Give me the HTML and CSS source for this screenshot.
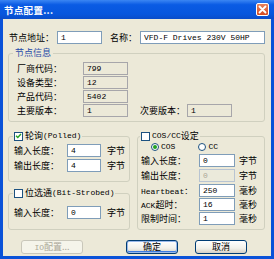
FILE: index.html
```html
<!DOCTYPE html>
<html lang="zh-CN">
<head>
    <meta charset="UTF-8">
    <title>节点配置</title>
    <link rel="stylesheet" href="styles.css">
</head>
<body>
    <div class="window">
        <div class="titlebar">
            <span class="title">节点配置...</span>
            <span class="close">
                <svg width="13" height="13" viewBox="0 0 13 13">
                    <path d="M3.5 3.5 L9.5 9.5 M9.5 3.5 L3.5 9.5" stroke="#fff" stroke-width="1.8" stroke-linecap="round"/>
                </svg>
            </span>
        </div>

        <div class="dialog">
            <div class="top-row">
                <label class="lbl-addr">节点地址：</label>
                <input class="field addr en" type="text" value="1">
                <label class="lbl-name">名称：</label>
                <input class="field name en" type="text" value="VFD-F Drives 230V 50HP">
            </div>

            <fieldset class="group info">
                <legend>节点信息</legend>
                <div class="info-row"><label>厂商代码：</label><span class="ro en">799</span></div>
                <div class="info-row"><label>设备类型：</label><span class="ro en">12</span></div>
                <div class="info-row"><label>产品代码：</label><span class="ro en">5402</span></div>
                <div class="info-row">
                    <label>主要版本：</label><span class="ro en">1</span>
                    <label class="minor">次要版本：</label><span class="ro minor-field en">1</span>
                </div>
            </fieldset>

            <div class="cols">
                <div class="col-left">
                    <fieldset class="group polled">
                        <legend><span class="check checked"><svg width="8" height="8" viewBox="0 0 8 8"><path d="M1.2 3.8 L3.2 5.8 L6.8 1.8" fill="none" stroke="#21a121" stroke-width="1.6"/></svg></span>轮询<span class="en">(Polled)</span></legend>
                        <div class="io-row first"><label>输入长度：</label><input class="field small en" type="text" value="4"><span class="unit">字节</span></div>
                        <div class="io-row"><label>输出长度：</label><input class="field small en" type="text" value="4"><span class="unit">字节</span></div>
                    </fieldset>

                    <fieldset class="group strobe">
                        <legend><span class="check"></span>位选通<span class="en">(Bit-Strobed)</span></legend>
                        <div class="io-row first"><label>输入长度：</label><input class="field small en" type="text" value="0"><span class="unit">字节</span></div>
                    </fieldset>
                </div>

                <fieldset class="group cos">
                    <legend><span class="check"></span><span class="en">COS/CC</span>设定</legend>
                    <div class="radios">
                        <span class="radio selected"></span><span class="en radio-text">COS</span>
                        <span class="radio cc"></span><span class="en radio-text">CC</span>
                    </div>
                    <div class="cos-row first"><label>输入长度：</label><input class="field cosf en" type="text" value="0"><span class="unit">字节</span></div>
                    <div class="cos-row"><label>输出长度：</label><input class="field cosf en" type="text" value="0" disabled><span class="unit">字节</span></div>
                    <div class="cos-row"><label class="en">Heartbeat：</label><input class="field cosf en" type="text" value="250"><span class="unit">毫秒</span></div>
                    <div class="cos-row tight"><label><span class="en">ACK</span>超时：</label><input class="field cosf en" type="text" value="16"><span class="unit">毫秒</span></div>
                    <div class="cos-row tight"><label>限制时间：</label><input class="field cosf en" type="text" value="1"><span class="unit">毫秒</span></div>
                </fieldset>
            </div>

            <div class="buttons">
                <button class="btn io" disabled><span class="en">IO</span>配置...</button>
                <button class="btn ok">确定</button>
                <button class="btn cancel">取消</button>
            </div>
        </div>
    </div>
</body>
</html>
```

FILE: styles.css
```css
body {
    margin: 0;
    font-family: "Noto Sans CJK SC", sans-serif;
    font-size: 9px;
    color: #000;
}
.en {
    font-family: "Liberation Mono", "Noto Sans CJK SC", monospace;
    font-size: 8px;
}
.window {
    width: 274px;
    height: 259px;
    box-sizing: border-box;
    background: #0a52d8;
    padding: 0 3px 3px;
    display: flex;
    flex-direction: column;
}
.titlebar {
    height: 19px;
    margin: 0 -3px;
    padding: 0 5px 0 4px;
    display: flex;
    align-items: center;
    justify-content: space-between;
    background: linear-gradient(#3b86f3, #0a5be4 25%, #0756dd 75%, #0a4cc8);
}
.title {
    color: #fff;
    font-weight: bold;
    font-size: 9.5px;
    letter-spacing: 0.3px;
}
.close {
    width: 13px;
    height: 13px;
    box-sizing: border-box;
    border: 1px solid #fff;
    border-radius: 2px;
    background: linear-gradient(#e8815c, #d44a21);
    display: flex;
    align-items: center;
    justify-content: center;
}
.close svg {
    margin: -1px;
}
.dialog {
    flex: 1;
    background: #ece9d8;
    padding: 12px 6px 0 5px;
}
.top-row {
    display: flex;
    align-items: center;
    height: 13px;
}
.lbl-addr {
    margin-left: 1px;
    width: 48px;
}
.lbl-name {
    margin-left: 8px;
    width: 30px;
}
.field {
    box-sizing: border-box;
    height: 13px;
    border: 1px solid #7f9db9;
    background: #fff;
    padding: 0 0 0 3px;
    margin: 0;
    color: #000;
    outline: none;
}
.field:disabled {
    background: #ebeadb;
    color: #aca899;
    border-color: #b8c4d2;
}
.addr {
    width: 45px;
}
.name {
    width: 125px;
}
.group {
    margin: 0;
    min-width: 0;
    border: 1px solid #d0d0bf;
    border-radius: 3px;
    padding: 0 4px 4px;
}
.group legend {
    padding: 0 2px;
    line-height: 12px;
    height: 12px;
    display: flex;
    align-items: center;
}
.info {
    margin-top: 3px;
    color: #000;
}
.info legend {
    color: #1f4aa8;
}
.info-row {
    display: flex;
    align-items: center;
    height: 13px;
    margin-top: 1px;
}
.info-row:first-of-type {
    margin-top: 3px;
}
.info-row label {
    width: 66px;
    padding-left: 4px;
}
.ro {
    box-sizing: border-box;
    width: 45px;
    height: 13px;
    line-height: 11px;
    border: 1px solid #a7a6aa;
    padding-left: 3px;
}
.info-row .minor {
    margin-left: 12px;
    width: 47px;
    padding-left: 0;
}
.cols {
    display: flex;
    gap: 7px;
    margin-top: 8px;
}
.col-left {
    width: 122px;
    display: flex;
    flex-direction: column;
}
.polled {
    padding: 0 4px 9px;
}
.polled legend,
.strobe legend {
    padding: 0 1px;
}
.strobe {
    margin-top: 5px;
    padding: 0 4px 10px;
}
.check {
    box-sizing: border-box;
    width: 9px;
    height: 9px;
    border: 1px solid #1c5180;
    background: #fff;
    margin-right: 2px;
    display: inline-flex;
    align-items: center;
    justify-content: center;
}
.io-row {
    display: flex;
    align-items: center;
    height: 13px;
    margin-top: 2px;
}
.strobe .io-row.first {
    margin-top: 7px;
}
.io-row label {
    width: 53px;
    padding-left: 1px;
}
.small {
    width: 34px;
}
.unit {
    margin-left: 6px;
}
.cos {
    width: 128px;
    box-sizing: border-box;
    padding: 0 2px 4px;
}
.cos legend {
    padding: 0 1px;
}
.radios {
    display: flex;
    align-items: center;
    height: 9px;
}
.radio {
    box-sizing: border-box;
    width: 8px;
    height: 8px;
    border: 1px solid #1c5180;
    border-radius: 50%;
    background: #fff;
    margin-left: 11px;
    display: inline-flex;
    align-items: center;
    justify-content: center;
}
.radio.selected::after {
    content: "";
    width: 4px;
    height: 4px;
    border-radius: 50%;
    background: #21a121;
}
.radio.cc {
    margin-left: 23px;
}
.radio-text {
    margin-left: 2px;
}
.cos-row {
    display: flex;
    align-items: center;
    height: 13px;
    margin-top: 2px;
}
.cos-row.first {
    margin-top: 3px;
}
.cos-row.tight {
    margin-top: 1px;
}
.cos-row label {
    width: 58px;
    padding-left: 1px;
}
.cosf {
    width: 36px;
}
.cos-row .unit {
    margin-left: 4px;
}
.buttons {
    display: flex;
    margin-top: 10px;
    height: 14px;
}
.btn {
    box-sizing: border-box;
    height: 14px;
    padding: 0;
    border: 1px solid #003c74;
    border-radius: 3px;
    background: linear-gradient(#ffffff, #f2f1ea 60%, #d6d0c5);
    font-family: "Noto Sans CJK SC", sans-serif;
    font-size: 9px;
    color: #000;
    line-height: 12px;
}
.btn.io {
    width: 62px;
    margin-left: 13px;
    border-color: #c9c7ba;
    background: #f5f4ea;
    color: #aca899;
}
.btn.ok {
    width: 52px;
    margin-left: 43px;
    box-shadow: inset 0 0 0 1px #98b8ea, inset 0 -1px 0 1px #3d7be0;
}
.btn.cancel {
    width: 52px;
    margin-left: 17px;
}
```
